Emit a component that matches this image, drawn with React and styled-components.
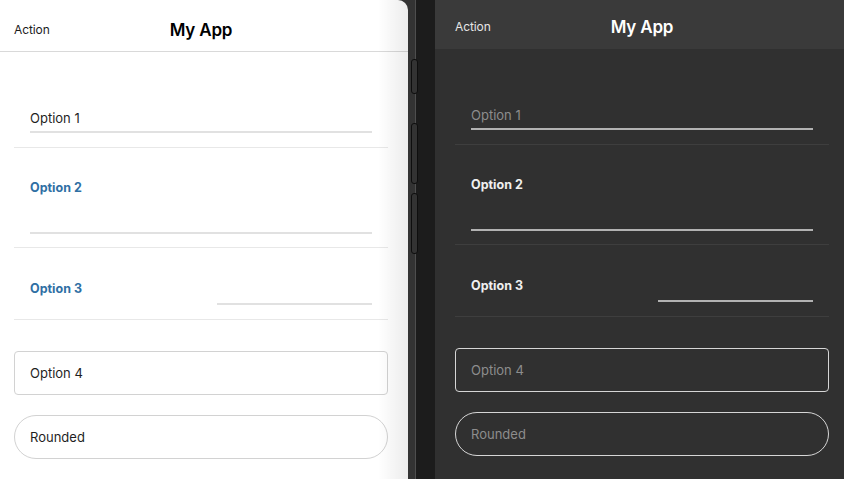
import React from "react";
import styled, { createGlobalStyle, ThemeProvider } from "styled-components";

const GlobalStyle = createGlobalStyle`
  html, body { margin: 0; padding: 0; }
  body {
    font-family: Inter, "Noto Sans", "Liberation Sans", sans-serif;
    overflow: hidden;
    background: #1c1c1c;
  }
  * { box-sizing: border-box; }
`;

const light = {
  bg: "#ffffff",
  headerBg: "transparent",
  headerBorder: "#d9d9d9",
  action: "#1c1c1c",
  title: "#000000",
  value: "#1f1f1f",
  underline: "#e1e1e1",
  sep: "#e8e8e8",
  label: "#2f6fa4",
  boxBorder: "#d2d2d2",
  boxText: "#1f1f1f",
  shade: true,
};

const dark = {
  bg: "#303030",
  headerBg: "#3a3a3a",
  headerBorder: "#3a3a3a",
  action: "#e6e6e6",
  title: "#ffffff",
  value: "#8d8d8d",
  underline: "#b2b2b2",
  sep: "#3e3e3e",
  label: "#f0f0f0",
  boxBorder: "#d6d6d6",
  boxText: "#8d8d8d",
  shade: false,
};

const Viewport = styled.div`
  width: 100vw;
  height: 100vh;
  overflow: hidden;
  background: #333333;
`;

const Device = styled.div`
  display: flex;
  margin-left: -6px;
  width: 849px;
  height: 479px;
`;

const Screen = styled.div`
  position: relative;
  flex: none;
  width: 414px;
  height: 482px;
  margin-top: ${(p) => (p.$shift ? "-3px" : "0")};
  background: ${(p) => p.theme.bg};
  border-top-right-radius: ${(p) => (p.$rounded ? "10px" : "0")};
  overflow: hidden;
  display: flex;
  flex-direction: column;

  &::after {
    content: "";
    display: ${(p) => (p.theme.shade ? "block" : "none")};
    position: absolute;
    top: 0;
    right: 0;
    bottom: 0;
    width: 30px;
    pointer-events: none;
    background: linear-gradient(to right, rgba(0,0,0,0), rgba(0,0,0,0.075));
  }
`;

const Header = styled.header`
  flex: none;
  height: 52px;
  padding: 8px 20px 0;
  display: grid;
  grid-template-columns: 1fr auto 1fr;
  align-items: center;
  background: ${(p) => p.theme.headerBg};
  border-bottom: 1px solid ${(p) => p.theme.headerBorder};
`;

const Action = styled.span`
  font-size: 12px;
  color: ${(p) => p.theme.action};
  letter-spacing: -0.1px;
`;

const Title = styled.h1`
  margin: 0;
  font-size: 17px;
  font-weight: 600;
  color: ${(p) => p.theme.title};
  letter-spacing: -0.2px;
`;

const Content = styled.main`
  padding: 0 20px;
  display: flex;
  flex-direction: column;
`;

const Item = styled.div`
  height: ${(p) => p.$h}px;
  padding: ${(p) => p.$pad};
  border-bottom: 1px solid ${(p) => p.theme.sep};
  display: flex;
  flex-direction: ${(p) => (p.$row ? "row" : "column")};
  justify-content: ${(p) => (p.$row ? "space-between" : "flex-end")};
  align-items: ${(p) => (p.$row ? "center" : "stretch")};
`;

const Field = styled.div`
  flex: ${(p) => (p.$grow ? "1" : "none")};
  height: ${(p) => (p.$grow ? "auto" : "28px")};
  width: ${(p) => (p.$w ? `${p.$w}px` : "auto")};
  border-bottom: 2px solid ${(p) => p.theme.underline};
  display: flex;
  align-items: center;
  font-size: 13px;
  color: ${(p) => p.theme.value};
`;

const Label = styled.span`
  font-size: 12.5px;
  font-weight: 700;
  line-height: 16px;
  color: ${(p) => p.theme.label};
  margin-bottom: ${(p) => (p.$lift ? "3px" : "0")};
`;

const Box = styled.div`
  height: ${(p) => (p.$pill ? 44 : 44)}px;
  margin-top: ${(p) => p.$mt}px;
  padding: 0 15px;
  display: flex;
  align-items: center;
  border: 1px solid ${(p) => p.theme.boxBorder};
  border-radius: ${(p) => (p.$pill ? "22px" : "4px")};
  font-size: 13px;
  color: ${(p) => p.theme.boxText};
`;

const Bezel = styled.div`
  position: relative;
  flex: none;
  width: 27px;
  height: 479px;
  display: flex;
`;

const Strip = styled.div`
  flex: none;
  width: ${(p) => p.$w}px;
  background: ${(p) => p.$c};
`;

const SideButtons = styled.div`
  position: absolute;
  left: 3px;
  top: 59px;
  display: flex;
  flex-direction: column;
  gap: 29px;
`;

const SideButton = styled.div`
  width: 7px;
  height: ${(p) => p.$h}px;
  margin-top: ${(p) => p.$mt || 0}px;
  background: #333333;
  border: 1px solid #0e0e0e;
  border-radius: 3px;
`;

function Phone({ theme, shift, rounded }) {
  return (
    <ThemeProvider theme={theme}>
      <Screen $shift={shift} $rounded={rounded}>
        <Header>
          <Action>Action</Action>
          <Title>My App</Title>
          <span />
        </Header>
        <Content>
          <Item $h={96} $pad="0 16px 14px">
            <Field>Option 1</Field>
          </Item>
          <Item $h={100} $pad="32px 16px 13px">
            <Label>Option 2</Label>
            <Field $grow />
          </Item>
          <Item $h={72} $row $pad="28px 16px 14px">
            <Label $lift>Option 3</Label>
            <Field $w={155} />
          </Item>
          <Box $mt={31}>Option 4</Box>
          <Box $mt={20} $pill>Rounded</Box>
        </Content>
      </Screen>
    </ThemeProvider>
  );
}

export default function App() {
  return (
    <>
      <GlobalStyle />
      <Viewport>
        <Device>
          <Phone theme={light} rounded />
          <Bezel>
            <Strip $w={7} $c="#333333" />
            <Strip $w={1} $c="#4e4e4e" />
            <Strip $w={19} $c="#1c1c1c" />
            <SideButtons>
              <SideButton $h={35} />
              <SideButton $h={61} />
              <SideButton $h={61} $mt={-20} />
            </SideButtons>
          </Bezel>
          <Phone theme={dark} shift />
        </Device>
      </Viewport>
    </>
  );
}
